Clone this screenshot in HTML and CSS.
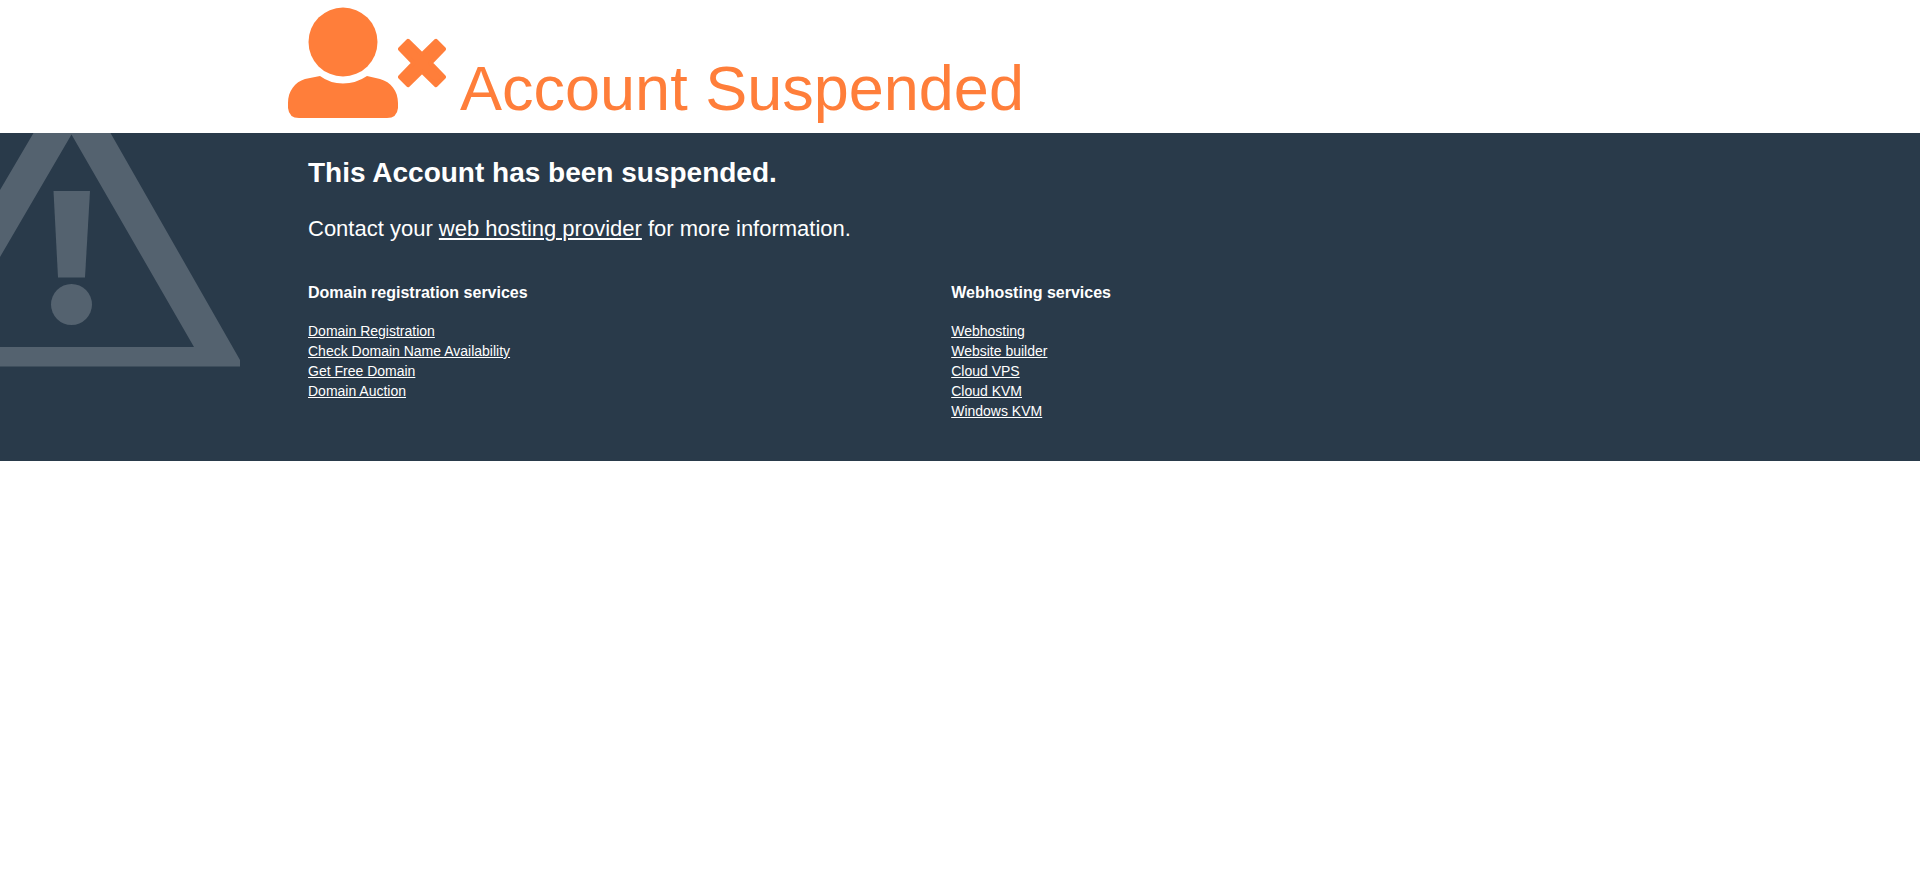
FILE: index.html
```html
<!DOCTYPE html>
<html lang="en">
<head>
    <meta charset="UTF-8">
    <meta name="viewport" content="width=device-width, initial-scale=1.0">
    <title>Account Suspended</title>
    <link rel="stylesheet" href="styles.css">
</head>
<body>
    <header class="status">
        <svg class="status-icon" width="158" height="112" viewBox="0 0 158 112" aria-hidden="true">
            <circle cx="55" cy="35" r="34.5"/>
            <path d="M32 69Q42 76.500 55 76.500T79 69L92 72C103 75 110 84 110 96V101Q109 111 99 111H11Q1 111 0 101V96C0 84 7 75 17 72Z"/>
            <path class="cross" d="M134 47.500L148 33.800L156 42L142.500 56L156 70L148 78.200L134 64.500L120 78.200L112 70L125.500 56L112 42L120 33.800Z"/>
        </svg>
        <h1>Account Suspended</h1>
    </header>

    <main class="info">
        <svg class="warning" width="240" height="240" viewBox="0 0 240 240" aria-hidden="true">
            <path fill-rule="evenodd" d="M33.500 0H110.500L240 227V233.500H0V214H194L71.500 1.500L0 124V57Z"/>
            <path d="M53.500 58H90L85 144.500H58Z"/>
            <circle cx="71.500" cy="171.500" r="20.500"/>
        </svg>
        <div class="content">
            <h2>This Account has been suspended.</h2>
            <p>Contact your <a href="#">web hosting provider</a> for more information.</p>
            <div class="services">
                <section>
                    <h3>Domain registration services</h3>
                    <ul>
                        <li><a href="#">Domain Registration</a></li>
                        <li><a href="#">Check Domain Name Availability</a></li>
                        <li><a href="#">Get Free Domain</a></li>
                        <li><a href="#">Domain Auction</a></li>
                    </ul>
                </section>
                <section>
                    <h3>Webhosting services</h3>
                    <ul>
                        <li><a href="#">Webhosting</a></li>
                        <li><a href="#">Website builder</a></li>
                        <li><a href="#">Cloud VPS</a></li>
                        <li><a href="#">Cloud KVM</a></li>
                        <li><a href="#">Windows KVM</a></li>
                    </ul>
                </section>
            </div>
        </div>
    </main>
</body>
</html>
```
FILE: styles.css
```css
body {
    margin: 0;
    font-family: "Liberation Sans", Arial, sans-serif;
    font-size: 14px;
    line-height: 20px;
    background-color: #fff;
}
.status {
    display: flex;
    align-items: flex-end;
    gap: 14px;
    padding: 7px 15% 14px;
    color: #ff7e3a;
}
.status-icon {
    flex: none;
    fill: currentColor;
}
.cross {
    stroke: currentColor;
    stroke-width: 4px;
    stroke-linejoin: round;
}
.status h1 {
    margin: 0;
    font-size: 63px;
    font-weight: normal;
    line-height: 62px;
}
.info {
    display: grid;
    grid-template-columns: 15% 67% auto;
    background-color: #293a4a;
    color: #fff;
}
.info a {
    color: #fff;
}
.warning {
    fill: #54626f;
}
.content {
    padding: 24px 0 40px 20px;
    margin-right: -20px;
}
.content h2 {
    margin: 0 0 24px;
    font-size: 28px;
    line-height: 32px;
}
.content p {
    margin: 0 0 38px;
    font-size: 22px;
    line-height: 32px;
}
.services {
    display: grid;
    grid-template-columns: 1fr 1fr;
}
.services h3 {
    margin: 0 0 18px;
    font-size: 16px;
    line-height: 20px;
}
.services ul {
    margin: 0;
    padding: 0;
    list-style: none;
}
```
